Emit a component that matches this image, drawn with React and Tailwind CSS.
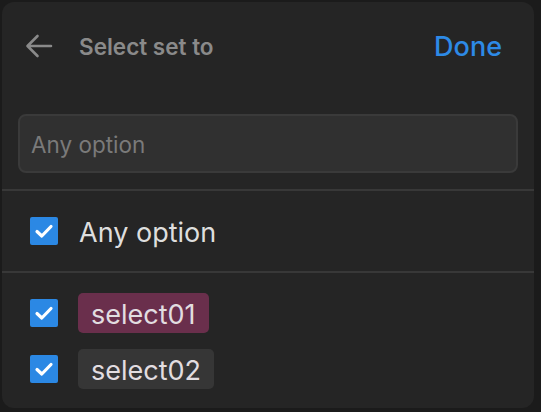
import React from "react";

function Check() {
  return (
    <div className="w-[28px] h-[28px] bg-[#2b88e4] rounded-[2px] flex items-center justify-center shrink-0">
      <svg width="20" height="16" viewBox="0 0 20 16" fill="none">
        <path d="M3 8.5 L7.8 13 L17 3.5" stroke="white" strokeWidth="3.2" strokeLinecap="round" strokeLinejoin="round" />
      </svg>
    </div>
  );
}

export default function App() {
  const items = [
    { label: "select01", bg: "bg-[#6a2f4c]" },
    { label: "select02", bg: "bg-[#363636]" },
  ];

  return (
    <div className="w-[541px] h-[412px] bg-[#1b1b1b] overflow-hidden" style={{ fontFamily: "Inter, 'Noto Sans', sans-serif" }}>
      <div className="ml-[2px] mt-[2px] w-[532px] h-[406px] rounded-[12px] bg-[#252525] flex flex-col">
        {/* header */}
        <div className="h-[88px] flex items-center pl-[23px] pr-[32px]">
          <svg width="28" height="24" viewBox="0 0 28 24" fill="none" className="shrink-0">
            <path d="M26 12 H3 M12.5 2 L2.5 12 L12.5 22" stroke="#8a8a8a" strokeWidth="2.6" strokeLinecap="round" strokeLinejoin="round" />
          </svg>
          <span className="ml-[26px] pt-[2px] text-[22.5px] font-semibold text-[#8a8a8a]">Select set to</span>
          <span className="ml-auto pt-[2px] text-[27px] font-medium text-[#2d8ae6]">Done</span>
        </div>

        {/* search */}
        <div className="mx-[16px] mt-[24px] h-[59px] rounded-[8px] bg-[#303030] border-2 border-[#3a3a3a] flex items-center px-[11px]">
          <span className="pt-[2px] text-[22.5px] text-[#7a7a7a]">Any option</span>
        </div>

        <div className="mt-[16px] h-[2px] bg-[#383838]" />

        <div className="h-[80px] flex items-center pl-[28px]">
          <Check />
          <span className="ml-[21px] pt-[4px] text-[27px] text-[#dedede]">Any option</span>
        </div>

        <div className="h-[2px] bg-[#383838]" />

        <div className="pt-[20px] flex flex-col gap-[16px] pl-[28px]">
          {items.map((it) => (
            <div key={it.label} className="h-[40px] flex items-center">
              <Check />
              <span className={`ml-[20px] h-[40px] px-[13px] pt-[4px] rounded-[5px] flex items-center text-[27px] text-[#e2dde0] ${it.bg}`}>
                {it.label}
              </span>
            </div>
          ))}
        </div>
      </div>
    </div>
  );
}
